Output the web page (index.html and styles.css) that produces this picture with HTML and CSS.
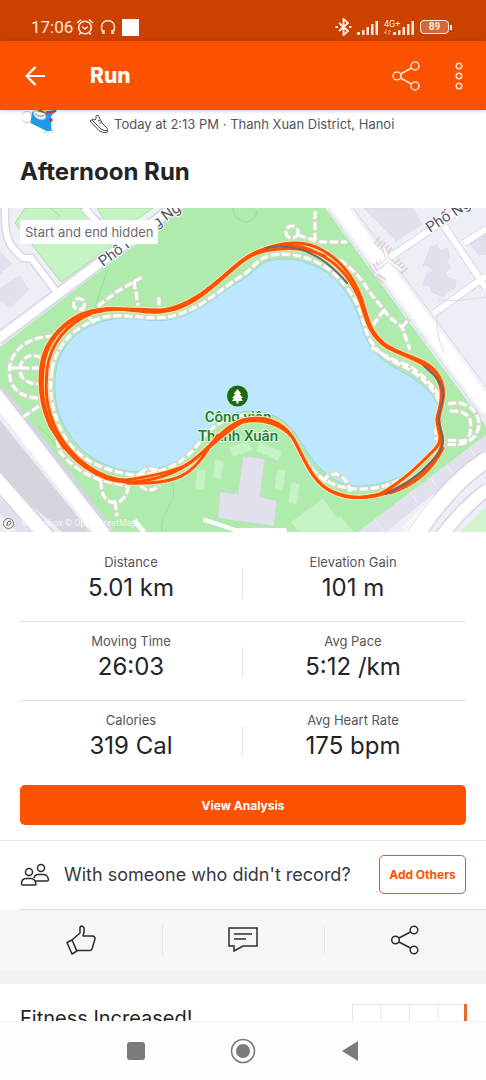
FILE: index.html
```
<!DOCTYPE html>
<html lang="en">
<head>
  <meta charset="UTF-8">
  <meta name="viewport" content="width=device-width, initial-scale=1">
  <title>Run</title>
  <link rel="stylesheet" href="styles.css">
</head>
<body>
  <div class="statusbar">
    <div class="status-left">
      <span class="clock">17:06</span>
      <svg width="18" height="18" viewBox="0 0 18 18" fill="none" stroke="#ffe9de" stroke-width="1.6" stroke-linecap="round">
        <circle cx="9" cy="9.5" r="6.3"/><path d="M1.5 4.5 4.5 2M16.5 4.5 13.5 2M6.5 9l2.5 2 2.5-2M4.5 15l-1 1M13.5 15l1 1"/>
      </svg>
      <svg class="headphones" width="16" height="18" viewBox="0 0 16 18" fill="none" stroke="#ffe0d0" stroke-width="1.5">
        <path d="M4 15C0 12 .5 3 8 2.500c7.500.500 8 9.500 4 12.500"/><path d="M3.500 12v4M12.500 12v4" stroke-width="2.500"/>
      </svg>
      <span class="square"></span>
    </div>
    <div class="status-right">
      <svg width="17" height="18" viewBox="0 0 17 18" fill="none" stroke="#ffe9de" stroke-width="1.9">
        <path d="m4 5 9 8-4.500 4V1L13 5l-9 8"/><path d="M.5 9h2.500M14 9h2.500" stroke-width="2"/>
      </svg>
      <svg width="22" height="15" viewBox="0 0 22 15" fill="#ffe9de">
        <path d="M0 12h3v3H0zM5 10h2.500v5H5zM9.500 7H12v8H9.500zM14 4h2.500v11H14zM18.500 1H21v14h-2.500z"/>
      </svg>
      <div class="network">
        <span>4G+</span>
        <svg width="7" height="6" viewBox="0 0 7 6" fill="none" stroke="#f0a888"><path d="M2 0v5M0 3l2 2M5 6V1M7 3 5 1"/></svg>
      </div>
      <svg class="signal-two" width="22" height="15" viewBox="0 0 22 15" fill="#ffe9de">
        <path d="M0 12h3v3H0zM5 10h2.500v5H5zM9.500 7H12v8H9.500zM14 4h2.500v11H14zM18.500 1H21v14h-2.500z"/>
      </svg>
      <span class="battery">89</span>
      <span class="battery-tip"></span>
    </div>
  </div>

  <header class="appbar">
    <button class="icon-button" aria-label="Back">
      <svg width="20" height="20" viewBox="0 0 20 20" fill="none" stroke="#fff" stroke-width="2.200"><path d="M20 10H2M10.500 1 1.500 10l9 9"/></svg>
    </button>
    <h1>Run</h1>
    <button class="icon-button" aria-label="Share">
      <svg width="28" height="30" viewBox="0 0 28 30" fill="none" stroke="#ffe3d6" stroke-width="1.500">
        <circle cx="5" cy="15" r="4"/><circle cx="23" cy="5" r="4"/><circle cx="23" cy="25" r="4"/><path d="m8.500 13 11-6M8.500 17l11 6"/>
      </svg>
    </button>
    <button class="icon-button more" aria-label="More options">
      <svg width="8" height="28" viewBox="0 0 8 28" fill="none" stroke="#ffe3d6" stroke-width="1.500">
        <circle cx="4" cy="4" r="2.800"/><circle cx="4" cy="14" r="2.800"/><circle cx="4" cy="24" r="2.800"/>
      </svg>
    </button>
  </header>

  <main>
    <div class="activity">
      <svg class="avatar" width="36" height="26" viewBox="0 0 36 26">
        <circle cx="5" cy="7" r="5.500" fill="#fff" stroke="#ccc"/>
        <path d="M10 2 35 0l-6 6 .5 15-5 0-16-8z" fill="#1e9be6"/>
        <path d="M11 1q0 8 9 9 5-1 4-4l-3-5z" fill="#eef6fb" stroke="#8fa4b0" stroke-width=".7"/>
        <path d="M13 4q5 4 9 1" fill="none" stroke="#666" stroke-width=".8"/>
        <path d="M16 0q8 4 18 1" fill="none" stroke="#d23c32" stroke-width="2"/>
        <circle cx="23" cy="1" r="1.500" fill="#f3c93b"/><circle cx="29" cy="10" r="1.700" fill="#b42c3c"/>
        <path d="M21 23q4-3 6 1M30 18q2 2 0 5" fill="none" stroke="#ccc"/>
      </svg>
      <svg class="shoe" width="20" height="20" viewBox="0 0 20 20" fill="none" stroke="#4a4a50" stroke-linejoin="round">
        <path d="M1 7 4 5l2 1 1-1V2l2-1 4 8 5 5q2 4-1 4.500-4 .5-7-2zM3 6l9 9q3 2 6 1.500M9 7l2-1M10.500 9.500l2-1"/>
      </svg>
      <p>Today at 2:13 PM · Thanh Xuan District, Hanoi</p>
    </div>
    <h2 class="title">Afternoon Run</h2>

    <div class="map">
      <svg viewBox="0 208 486 324" role="img" aria-label="Route map">
        <rect y="208" width="486" height="324" fill="#aeebac"/>

        <!-- north west blocks -->
        <path d="M0 208h183L0 347z" fill="#edeef6"/>
        <g fill="#c6f3c4" stroke="#9fe39f">
          <path d="M15 223 25 208H87L124 238 61 282z"/><path d="M97 208h56l-39 27z"/>
        </g>
        <path d="m38 235 22-19-10-8" fill="none" stroke="#9fe39f"/>
        <g fill="#e2e0ec"><path d="M0 251 12 264 0 274z"/><path d="m0 288 20-13 9 15-19 18-10-8z"/></g>
        <g fill="none" stroke="#d8d9e9" stroke-width="9"><path d="M5 208q-1 30 8 40t10 10h8l27 36M84 208l30 32"/><path d="M-2 339 178 204" stroke-width="13"/></g>
        <g fill="none" stroke="#fff" stroke-width="6"><path d="M5 208q-1 30 8 40t10 10h8l27 36M84 208l30 32"/><path d="M-2 339 178 204" stroke-width="9"/></g>

        <!-- north east blocks -->
        <path d="M325 208H486V426z" fill="#edeef6"/>
        <g fill="#e2e0ec" stroke="#d9d6e5" stroke-width=".6">
          <path d="m364 208 32 33 26-17-10-16z"/>
          <path d="m430 248 7-3 3 5 7-2 3 10-4 3 5 7-6 4 3 6 8 2-1 8-8 3-4 6-11-5-2-6-7-1 4-12 7-1-7-7-4 1z"/>
          <path d="m470 244 16-10v20l-7 1z"/>
        </g>
        <g fill="none" stroke="#d8d9e9">
          <path d="M389 258 462 208M433 314l53-38M444 226l42 62M464 243l22-14" stroke-width="8"/>
          <path d="m337 204 153 206" stroke-width="22"/>
        </g>
        <g fill="none" stroke="#fff">
          <path d="M389 258 462 208M433 314l53-38M444 226l42 62M464 243l22-14" stroke-width="6"/>
          <path d="m337 204 153 206" stroke="#f1f2f8" stroke-width="20"/>
          <path d="m337 204 153 206" stroke-width="14"/>
        </g>
        <path d="M438 300q18 2 48-3M439 310q-6 18 5 43" fill="none" stroke="#dcdce5"/>
        <path d="m376 240 14 12M371 270l11-7M396 261l10 12M379 281l4-6" stroke="#e0d4da" stroke-width="9" stroke-dasharray="2 2" fill="none"/>
        <path d="M377 268 388 260 401 270M388 260l-4-12" stroke="#e0d4da" stroke-width="4" fill="none"/>
        <path d="M377 268 388 260 401 270M388 260l-4-12" stroke="#fff" stroke-width="2" fill="none"/>

        <!-- south west roads -->
        <path d="M0 392V532H110z" fill="#edeef6"/>
        <path d="m0 420 90 112H62L0 478z" fill="#d6d5df"/>
        <path d="M-4 391 107 535M-4 479 50 540" stroke="#d4d5e3" stroke-width="18"/>
        <path d="M-5 394 104 535M-5 478 50 540" stroke="#fff" stroke-width="14"/>
        <path d="m0 498 34 34H18L0 514z" fill="#e2e0ec"/>
        <path d="M134 520 144 532" stroke="#fff" stroke-width="5"/>

        <!-- south east roads -->
        <path d="M486 435 358 532H486z" fill="#edeef6"/>
        <path d="M486 435 358 532H386l100-81z" fill="#e2e0ec"/>
        <path d="m375 520 8 11M410 492l8 11M431 478l5 8M447 466l6 8M470 448l5 8" stroke="#f3f2f7"/>
        <path d="M488 459Q450 482 414 538" fill="none" stroke="#d4d5e3" stroke-width="19"/>
        <path d="M488 489Q462 508 440 538" fill="none" stroke="#d4d5e3" stroke-width="15"/>
        <path d="M488 459Q450 482 414 538" fill="none" stroke="#fff" stroke-width="16"/>
        <path d="M488 489Q462 508 440 538" fill="none" stroke="#fff" stroke-width="12"/>
        <path d="m405 530 32-32" stroke="#fff" stroke-width="9" stroke-dasharray="1 1"/>
        <path d="M460 532 486 507V532z" fill="#d2f4cf"/>

        <!-- park buildings and lawns -->
        <path d="m243 456 22 3-5 38 17 4-3 25-56-8 2-26 18 2z" fill="#e2e0ec" stroke="#d5d0df" stroke-width=".6"/>
        <g fill="#c6f3c4" stroke="#b6e9b4" stroke-width=".7">
          <path d="m197 469 9 1-2 20-9-1zM215 459l9 2-3 19-8-2zM228 447l19-6 6 9-20 7zM260 442l22 10-4 9-22-10zM277 469l9 1-3 21-9-2zM291 482l9 2-3 21-9-2zM291 522l32-24 14 20 4-2 13 16H298z"/>
        </g>
        <path d="m205 520 30 10h50" fill="none" stroke="#fff" stroke-width="4" stroke-linecap="round"/>
        <path d="M108 269 94 310M170 481q8 10-1 25t-7 26M38 426q14 12 17 20M233 208q1 13 14 14 9-2 10-11" fill="none" stroke="#9cd99c"/>

        <path class="lake" d="M56 370C60 345 80 326 108 320 128 315 148 323 168 320 198 315 220 292 243 279 252 274 258 265 268 261 290 256 312 261 330 275 350 292 358 312 363 330 370 350 378 357 392 366 412 377 432 388 439 408 442 420 444 432 439 441 430 462 400 485 360 486 335 487 318 468 307 452 298 438 291 418 262 412 235 407 215 420 200 440 188 458 170 469 133 472 100 468 78 450 68 432 55 412 53 390 56 370Z"/>

        <!-- foot paths: a soft edge with white dashes on top -->
        <defs>
          <g id="paths">
            <path d="M52 370C56 342 80 323 105 317 125 313 145 320 168 317 198 312 220 289 243 275 252 270 256 260 268 256 290 251 314 257 332 272 353 290 361 310 365 328 371 347 382 356 396 363 415 371 431 384 439 401 442 412 434 424 436 440"/>
            <path d="M52 370C49 392 51 410 63 434 75 456 98 470 133 475 170 474 190 458 203 437 215 424 230 416 243 415M57 440 60 452Q75 471 100 480L127 486"/>
            <path d="M293 440Q303 458 313 470 330 489 360 489T410 473M324 482q2-8 12-8 12 3 14 18M140 473l8-5 12 3M140 485q9 10 20 0M101 481q0 18 10 21h8q10-7 9-17M115 502l2 14"/>
            <path d="M54 336Q25 337 14 355 7 366 11 382 18 398 40 398M42 358Q25 350 20 367 19 383 38 384M10 368h33M23 417 42 404"/>
            <path d="M98 306 118 291 144 276M134 281l4 25M159 297v12M82 309l12 14"/>
            <circle cx="79" cy="304" r="5.500"/>
            <circle cx="292" cy="232" r="6"/>
            <path d="M298 235 319 242H347M315 211v29M340 260Q360 275 368 290L384 310Q388 317 402 327L410 350M402 327l8-9M384 310 371 328"/>
            <path d="M372 347Q388 359 410 366 432 382 442 400M448 404q16-4 26 7 10 13 0 26-9 10-29 7M450 411q15-1 20 8 3 18-6 22l-18-1"/>
          </g>
        </defs>
        <use href="#paths" class="path-edge"/>
        <use href="#paths" class="path-dash"/>

        <!-- place names -->
        <g class="street">
          <text transform="translate(103 267) rotate(-36)">Phố Hoàng Ng</text>
          <text transform="translate(430 233) rotate(-33)">Phố Ng</text>
        </g>
        <circle cx="237.500" cy="396" r="10.500" fill="#1d6a0c"/>
        <path d="m237.500 389 4 5h-2l3.500 4h-2l2 3h-4.500v2.500h-2V401H232l2-3h-2l3.500-4h-2z" fill="#fff"/>
        <g class="park">
          <text x="238" y="422">Công viên</text>
          <text x="238" y="441">Thanh Xuân</text>
        </g>

        <!-- recorded laps -->
        <defs>
          <g id="laps">
            <path d="M43 370C45 342 62 322 90 312 115 303 135 314 160 312 195 310 220 276 243 260 270 243 300 237 322 250 344 262 355 280 362 300 368 320 370 333 386 345 405 357 425 358 436 372 450 390 441 405 439 418 438 430 447 438 439 452 428 470 408 484 386 493 368 499 350 499 333 492 312 484 303 455 293 438 282 420 262 415 243 420 220 428 213 447 187 465 168 477 145 482 127 482 98 482 70 460 55 433 43 410 41 392 43 370Z"/>
            <path d="M47 370C50 344 66 324 92 313 118 306 140 310 162 310 195 306 221 277 243 260 266 243 295 241 317 253 342 265 353 283 361 303 367 324 371 337 388 348 406 357 424 361 435 375 446 390 440 406 437 418 436 430 445 437 436 448 420 464 405 480 380 494 360 499 346 499 333 492 312 484 303 455 293 438 282 424 262 418 243 422 225 430 203 456 184 466 166 474 140 478 127 480 98 480 71 457 57 431 46 408 45 392 47 370Z"/>
            <path d="M41 366C44 341 66 317 91 311 113 306 138 312 160 311 193 312 219 279 243 261 262 246 300 245 325 256M41 366Q37 397 50 426L64 448M127 483C178 485 193 474 208 449L218 435M390 493Q427 481 443 448"/>
          </g>
        </defs>
        <use href="#laps" class="lap-edge"/>
        <use href="#laps" class="lap"/>
        <path class="hidden-part" d="M266 248Q298 242 325 262 337 271 347 283M424 366 435 376Q448 391 441 406 437 420 441 431 448 447 431 462 412 483 386 494"/>

        <circle cx="8.500" cy="523.500" r="5" fill="#f4f4f4" stroke="#777"/>
        <path d="M7 526q0-5 2-5 3 0 1.500 3-1 1-2 1" fill="none" stroke="#555"/>
        <text class="credit" x="21" y="526">© Mapbox © OpenStreetMap</text>
      </svg>
      <span class="map-note">Start and end hidden</span>
    </div>

    <section class="stats">
      <dl class="stat-row">
        <div class="stat"><dt>Distance</dt><dd>5.01 km</dd></div>
        <div class="stat"><dt>Elevation Gain</dt><dd>101 m</dd></div>
      </dl>
      <dl class="stat-row">
        <div class="stat"><dt>Moving Time</dt><dd>26:03</dd></div>
        <div class="stat"><dt>Avg Pace</dt><dd>5:12 /km</dd></div>
      </dl>
      <dl class="stat-row">
        <div class="stat"><dt>Calories</dt><dd>319 Cal</dd></div>
        <div class="stat"><dt>Avg Heart Rate</dt><dd>175 bpm</dd></div>
      </dl>
      <button class="analysis">View Analysis</button>
    </section>

    <section class="others">
      <svg width="30" height="24" viewBox="0 0 30 24" fill="none" stroke="#2b2b30" stroke-width="1.500">
        <circle cx="9" cy="9" r="3.500"/><circle cx="21" cy="5" r="3.500"/>
        <path d="M6 15.500h5q4 0 5 5.500 0 1-1 1H3q-1.500 0-1.500-1 0-5.500 4.500-5.500zM14 15q1-3.500 4-3.500h5.500q4 0 5 5 0 1.500-1.500 1.500H15"/>
      </svg>
      <p>With someone who didn't record?</p>
      <button class="add">Add Others</button>
    </section>

    <div class="actions">
      <button aria-label="Give kudos">
        <svg width="30" height="30" viewBox="0 0 30 30" fill="none" stroke="#2b2b30" stroke-width="1.500" stroke-linejoin="round">
          <path d="m1 17.500 5-2.500 5 11-5 3zM6 15l8-7V3q0-2 2-2l2 1.500V7l-1 4h9.500q2.500 0 2.500 3l-3 10q-.5 1.500-2 1.500H11M7.500 18.500l3 7"/>
        </svg>
      </button>
      <button aria-label="Comment">
        <svg width="30" height="26" viewBox="0 0 30 26" fill="none" stroke="#2b2b30" stroke-width="1.500">
          <path d="M1 1h28v18H15L6 24v-5H1zM6 7h18M6 12h12"/>
        </svg>
      </button>
      <button aria-label="Share activity">
        <svg width="30" height="30" viewBox="0 0 28 30" fill="none" stroke="#2b2b30" stroke-width="1.500">
          <circle cx="4.500" cy="15" r="3.800"/><circle cx="23" cy="5" r="3.800"/><circle cx="23" cy="25" r="3.800"/><path d="m8 13 11.500-6M8 17l11.500 6"/>
        </svg>
      </button>
    </div>

    <section class="fitness">
      <h3>Fitness Increased!</h3>
      <svg width="118" height="60" viewBox="0 0 118 60" fill="none" stroke="#e3e3e9">
        <path d="M3.500 60V.5H116M32 0v60M60.500 0v60M89 0v60"/><path d="M116.500 0v60" stroke="#ea6a30" stroke-width="3"/>
      </svg>
    </section>
  </main>

  <nav class="navbar">
    <button aria-label="Recent apps"><svg width="18" height="18" viewBox="0 0 18 18"><rect width="18" height="18" rx="3" fill="#7b7b7b"/></svg></button>
    <button aria-label="Home"><svg width="26" height="26" viewBox="0 0 26 26"><circle cx="13" cy="13" r="11.500" fill="none" stroke="#7b7b7b" stroke-width="1.600"/><circle cx="13" cy="13" r="7" fill="#7b7b7b"/></svg></button>
    <button aria-label="Back"><svg width="18" height="22" viewBox="0 0 18 22"><path d="M17 1v20L1 11z" fill="#7b7b7b"/></svg></button>
  </nav>
</body>
</html>
```
FILE: styles.css
```
* {
  box-sizing: border-box;
}

body {
  margin: 0;
  height: 100vh;
  display: flex;
  flex-direction: column;
  overflow: hidden;
  background: #fff;
  color: #242428;
  font-family: Inter, "Liberation Sans", sans-serif;
}

h1, h2, h3, p, dl, dd {
  margin: 0;
}

button {
  border: 0;
  padding: 0;
  background: none;
  font-family: inherit;
}

svg {
  display: block;
  flex-shrink: 0;
}

/* system status bar */
.statusbar {
  flex-shrink: 0;
  height: 41px;
  padding: 13px 34px 0 31px;
  display: flex;
  justify-content: space-between;
  background: #cb4100;
  color: #ffe9de;
  font-family: Roboto, sans-serif;
}

.status-left,
.status-right {
  display: flex;
  align-items: center;
  height: 28px;
}

.clock {
  width: 45px;
  font-size: 17px;
}

.headphones {
  margin: 0 6px;
}

.square {
  width: 17px;
  height: 17px;
  background: #fff;
}

.status-right > svg {
  margin-right: 5px;
}

.network {
  width: 17px;
  font-size: 9px;
  line-height: 9px;
}

.status-right .signal-two {
  margin: 0 5px 0 -8px;
}

.battery {
  width: 29px;
  height: 14px;
  border: 1px solid #ffe9de;
  border-radius: 4px;
  background: #d4683a;
  font-size: 10px;
  font-weight: bold;
  line-height: 12px;
  text-align: center;
}

.battery-tip {
  width: 2px;
  height: 5px;
  margin-left: 1px;
  background: #ffe9de;
}

/* title bar */
.appbar {
  flex-shrink: 0;
  height: 69px;
  padding: 0 23px 0 25px;
  display: flex;
  align-items: center;
  background: #fc5200;
  box-shadow: 0 1px 4px rgba(0, 0, 0, 0.2);
  z-index: 1;
}

.appbar h1 {
  flex: 1;
  margin-left: 45px;
  color: #fff;
  font-size: 21px;
  font-weight: 800;
}

.icon-button.more {
  margin-left: 35px;
}

/* scrolling content */
main {
  flex: 1;
  min-height: 0;
  overflow: hidden;
}

.activity {
  height: 28px;
  padding: 0 20px;
  display: flex;
  color: #55555b;
  font-size: 13px;
  line-height: 28px;
}

.avatar {
  margin-left: 2px;
}

.shoe {
  margin: 4px 5px 0 31px;
}

.title {
  padding: 16px 20px 18px;
  font-size: 24px;
  font-weight: 700;
  line-height: 36px;
}

.map {
  position: relative;
}

.map > svg {
  width: 100%;
  height: auto;
}

.map-note {
  position: absolute;
  top: 12px;
  left: 20px;
  padding: 0 5px;
  border-radius: 3px;
  background: #fff;
  color: #6b6b72;
  font-size: 13px;
  line-height: 24px;
}

.lake {
  fill: #bde6ff;
  stroke: #95d3f0;
  stroke-width: 1;
}

.path-edge,
.path-dash {
  fill: none;
  stroke: #cfdcc6;
  stroke-width: 5;
}

.path-dash {
  stroke: #fff;
  stroke-width: 3;
  stroke-dasharray: 8 3;
}

.street,
.park {
  font-family: Roboto, "Noto Sans", sans-serif;
  fill: #55555f;
  stroke: #fff;
  stroke-width: 2;
  paint-order: stroke;
  font-size: 15px;
}

.park {
  fill: #1c8023;
  stroke: #e2f6ea;
  font-weight: 500;
  text-anchor: middle;
}

.lap-edge,
.lap,
.hidden-part {
  fill: none;
  stroke: #fbe3bd;
  stroke-width: 5;
  stroke-linecap: round;
}

.lap {
  stroke: #fc5200;
  stroke-width: 3;
}

.hidden-part {
  stroke: #6d6870;
  stroke-width: 2;
}

.credit {
  font-family: Roboto, sans-serif;
  font-size: 9px;
  fill: #fff;
  fill-opacity: 0.75;
}

/* numbers */
.stats {
  padding: 11px 20px 15px;
  border-bottom: 1px solid #e6e6ea;
}

.stat-row {
  display: flex;
  padding-right: 2px;
  border-bottom: 1px solid #e0e0e4;
}

.stat-row:nth-of-type(3) {
  border-bottom: 0;
}

.stat {
  flex: 1;
  padding: 9px 0 17px;
  text-align: center;
  background: linear-gradient(#e6e6ea, #e6e6ea) no-repeat left 25px / 1px 30px;
}

.stat:first-child {
  background: none;
}

.stat dt {
  color: #55555b;
  font-size: 13px;
  line-height: 20px;
}

.stat dd {
  font-size: 24px;
  line-height: 32px;
}

.analysis {
  width: 100%;
  height: 40px;
  margin-top: 6px;
  border-radius: 5px;
  background: #fc5200;
  color: #fff;
  font-size: 12px;
  font-weight: 700;
}

.others {
  margin-left: 20px;
  padding: 14px 20px 15px 0;
  display: flex;
  align-items: center;
  border-bottom: 1px solid #dcdce2;
}

.others p {
  flex: 1;
  margin-left: 14px;
  color: #38383d;
  font-size: 18px;
}

.add {
  width: 87px;
  height: 39px;
  border: 1px solid #fc5200;
  border-radius: 5px;
  color: #fc5200;
  font-size: 12px;
  font-weight: 700;
}

.actions {
  height: 74px;
  display: flex;
  background: #f6f6f9;
  border-bottom: 15px solid #f1f1f6;
}

.actions button {
  flex: 1;
  display: flex;
  align-items: center;
  justify-content: center;
  background: linear-gradient(#e6e6ea, #e6e6ea) no-repeat left center / 1px 30px;
}

.actions button:first-child {
  background: none;
}

.fitness {
  padding: 20px 19px 20px 20px;
  display: flex;
  justify-content: space-between;
}

.fitness h3 {
  font-size: 20px;
  font-weight: 400;
  line-height: 28px;
}

/* system navigation */
.navbar {
  flex-shrink: 0;
  height: 59px;
  padding: 0 82px;
  display: flex;
  align-items: center;
  background: #fdfdfd;
  border-top: 1px solid #f4f4f4;
}

.navbar button {
  flex: 1;
  display: flex;
  justify-content: center;
}
```
